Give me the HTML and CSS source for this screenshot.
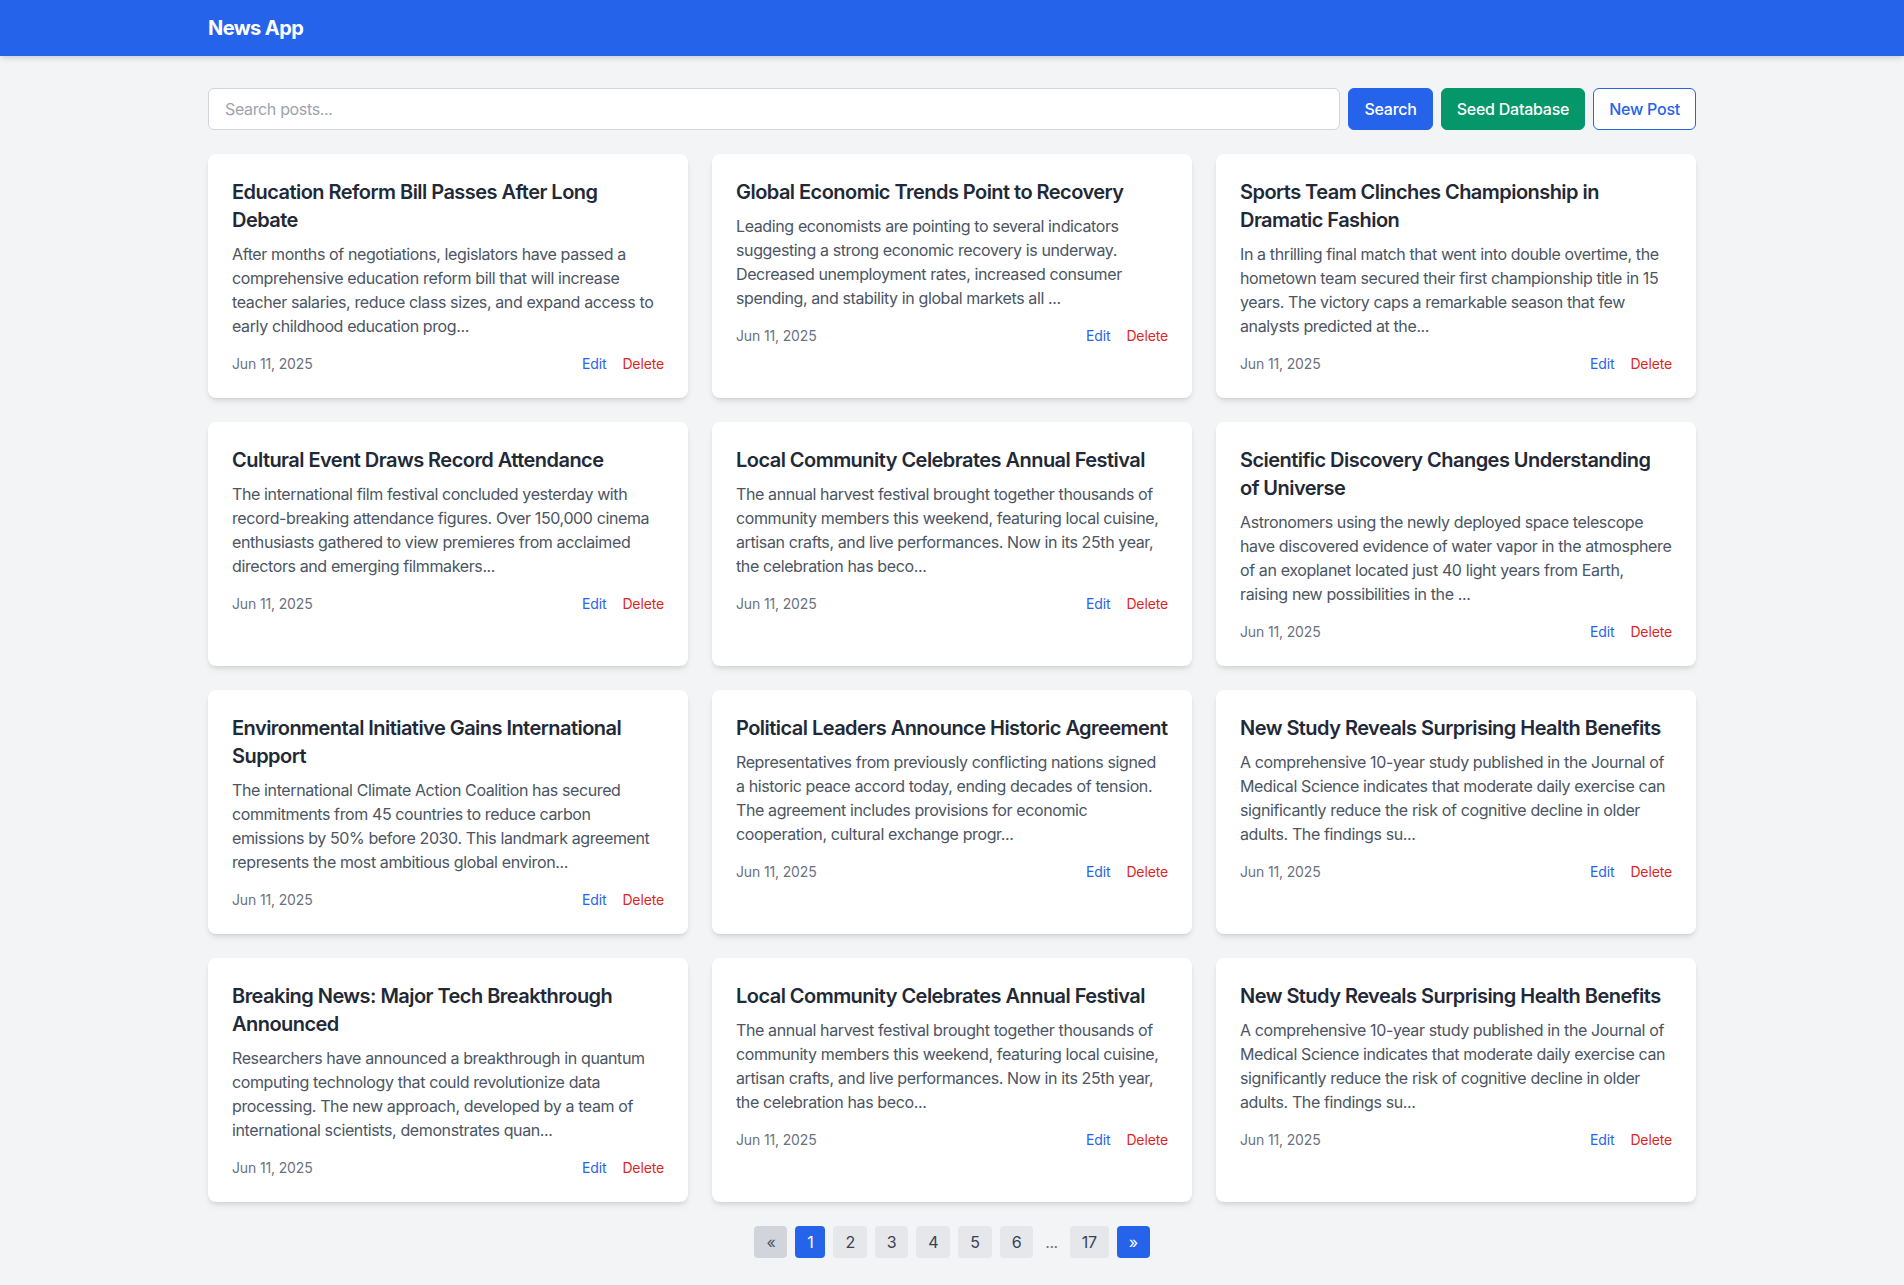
FILE: index.html
```html
<!DOCTYPE html>
<html lang="en">
<head>
<meta charset="utf-8">
<title>News App</title>
<link rel="stylesheet" href="styles.css">
</head>
<body>
<header class="topbar">
  <div class="container">
    <h1 class="brand">News App</h1>
  </div>
</header>
<main class="container main">
  <div class="toolbar">
    <input class="search-input" type="text" placeholder="Search posts...">
    <button class="btn btn-blue">Search</button>
    <button class="btn btn-green">Seed Database</button>
    <button class="btn btn-outline">New Post</button>
  </div>

  <div class="grid">
    <article class="card">
      <h2 class="card-title">Education Reform Bill Passes After Long Debate</h2>
      <p class="card-text">After months of negotiations, legislators have passed a comprehensive education reform bill that will increase teacher salaries, reduce class sizes, and expand access to early childhood education prog...</p>
      <div class="card-footer"><span class="date">Jun 11, 2025</span><div class="actions"><a class="edit">Edit</a><a class="delete">Delete</a></div></div>
    </article>
    <article class="card">
      <h2 class="card-title">Global Economic Trends Point to Recovery</h2>
      <p class="card-text">Leading economists are pointing to several indicators suggesting a strong economic recovery is underway. Decreased unemployment rates, increased consumer spending, and stability in global markets all ...</p>
      <div class="card-footer"><span class="date">Jun 11, 2025</span><div class="actions"><a class="edit">Edit</a><a class="delete">Delete</a></div></div>
    </article>
    <article class="card">
      <h2 class="card-title">Sports Team Clinches Championship in Dramatic Fashion</h2>
      <p class="card-text">In a thrilling final match that went into double overtime, the hometown team secured their first championship title in 15 years. The victory caps a remarkable season that few analysts predicted at the...</p>
      <div class="card-footer"><span class="date">Jun 11, 2025</span><div class="actions"><a class="edit">Edit</a><a class="delete">Delete</a></div></div>
    </article>

    <article class="card">
      <h2 class="card-title">Cultural Event Draws Record Attendance</h2>
      <p class="card-text">The international film festival concluded yesterday with record-breaking attendance figures. Over 150,000 cinema enthusiasts gathered to view premieres from acclaimed directors and emerging filmmakers...</p>
      <div class="card-footer"><span class="date">Jun 11, 2025</span><div class="actions"><a class="edit">Edit</a><a class="delete">Delete</a></div></div>
    </article>
    <article class="card">
      <h2 class="card-title">Local Community Celebrates Annual Festival</h2>
      <p class="card-text">The annual harvest festival brought together thousands of community members this weekend, featuring local cuisine, artisan crafts, and live performances. Now in its 25th year, the celebration has beco...</p>
      <div class="card-footer"><span class="date">Jun 11, 2025</span><div class="actions"><a class="edit">Edit</a><a class="delete">Delete</a></div></div>
    </article>
    <article class="card">
      <h2 class="card-title">Scientific Discovery Changes Understanding of Universe</h2>
      <p class="card-text">Astronomers using the newly deployed space telescope have discovered evidence of water vapor in the atmosphere of an exoplanet located just 40 light years from Earth, raising new possibilities in the ...</p>
      <div class="card-footer"><span class="date">Jun 11, 2025</span><div class="actions"><a class="edit">Edit</a><a class="delete">Delete</a></div></div>
    </article>

    <article class="card">
      <h2 class="card-title">Environmental Initiative Gains International Support</h2>
      <p class="card-text">The international Climate Action Coalition has secured commitments from 45 countries to reduce carbon emissions by 50% before 2030. This landmark agreement represents the most ambitious global environ...</p>
      <div class="card-footer"><span class="date">Jun 11, 2025</span><div class="actions"><a class="edit">Edit</a><a class="delete">Delete</a></div></div>
    </article>
    <article class="card">
      <h2 class="card-title">Political Leaders Announce Historic Agreement</h2>
      <p class="card-text">Representatives from previously conflicting nations signed a historic peace accord today, ending decades of tension. The agreement includes provisions for economic cooperation, cultural exchange progr...</p>
      <div class="card-footer"><span class="date">Jun 11, 2025</span><div class="actions"><a class="edit">Edit</a><a class="delete">Delete</a></div></div>
    </article>
    <article class="card">
      <h2 class="card-title">New Study Reveals Surprising Health Benefits</h2>
      <p class="card-text">A comprehensive 10-year study published in the Journal of Medical Science indicates that moderate daily exercise can significantly reduce the risk of cognitive decline in older adults. The findings su...</p>
      <div class="card-footer"><span class="date">Jun 11, 2025</span><div class="actions"><a class="edit">Edit</a><a class="delete">Delete</a></div></div>
    </article>

    <article class="card">
      <h2 class="card-title">Breaking News: Major Tech Breakthrough Announced</h2>
      <p class="card-text">Researchers have announced a breakthrough in quantum computing technology that could revolutionize data processing. The new approach, developed by a team of international scientists, demonstrates quan...</p>
      <div class="card-footer"><span class="date">Jun 11, 2025</span><div class="actions"><a class="edit">Edit</a><a class="delete">Delete</a></div></div>
    </article>
    <article class="card">
      <h2 class="card-title">Local Community Celebrates Annual Festival</h2>
      <p class="card-text">The annual harvest festival brought together thousands of community members this weekend, featuring local cuisine, artisan crafts, and live performances. Now in its 25th year, the celebration has beco...</p>
      <div class="card-footer"><span class="date">Jun 11, 2025</span><div class="actions"><a class="edit">Edit</a><a class="delete">Delete</a></div></div>
    </article>
    <article class="card">
      <h2 class="card-title">New Study Reveals Surprising Health Benefits</h2>
      <p class="card-text">A comprehensive 10-year study published in the Journal of Medical Science indicates that moderate daily exercise can significantly reduce the risk of cognitive decline in older adults. The findings su...</p>
      <div class="card-footer"><span class="date">Jun 11, 2025</span><div class="actions"><a class="edit">Edit</a><a class="delete">Delete</a></div></div>
    </article>
  </div>

  <nav class="pagination">
    <span class="page page-disabled">&laquo;</span>
    <span class="page page-active">1</span>
    <span class="page">2</span>
    <span class="page">3</span>
    <span class="page">4</span>
    <span class="page">5</span>
    <span class="page">6</span>
    <span class="ellipsis">...</span>
    <span class="page">17</span>
    <span class="page page-active">&raquo;</span>
  </nav>
</main>
</body>
</html>
```

FILE: styles.css
```css
* { box-sizing: border-box; }

html, body {
  margin: 0;
  padding: 0;
}

body {
  background: #f3f4f6;
  font-family: Inter, "Noto Sans", "Liberation Sans", sans-serif;
  color: #1f2937;
  font-size: 16px;
  line-height: 24px;
  letter-spacing: -0.024em;
}

.container {
  max-width: 1536px;
  margin: 0 auto;
  padding-left: 24px;
  padding-right: 24px;
}

.topbar {
  background: #2563eb;
  box-shadow: 0 4px 6px -1px rgba(0,0,0,0.1), 0 2px 4px -2px rgba(0,0,0,0.1);
}

.topbar .container {
  padding-top: 16px;
  padding-bottom: 16px;
}

.brand {
  margin: 0;
  color: #ffffff;
  font-size: 20px;
  line-height: 24px;
  font-weight: 700;
  letter-spacing: -0.03em;
}

.main {
  padding-top: 32px;
  padding-bottom: 24px;
}

.toolbar {
  display: flex;
  gap: 8px;
  margin-bottom: 24px;
}

.search-input {
  flex: 1;
  font-family: inherit;
  font-size: 16px;
  line-height: 24px;
  letter-spacing: -0.022em;
  padding: 8px 16px;
  border: 1px solid #d1d5db;
  border-radius: 6px;
  background: #fff;
  color: #1f2937;
  outline: none;
}

.search-input::placeholder {
  color: #9ca3af;
}

.btn {
  font-family: inherit;
  font-size: 16px;
  line-height: 24px;
  letter-spacing: -0.015em;
  font-weight: 500;
  padding: 8px 15px;
  border-radius: 6px;
  border: 1px solid transparent;
  cursor: pointer;
}

.btn-blue {
  background: #2563eb;
  border-color: #2563eb;
  color: #fff;
}

.btn-green {
  background: #059669;
  border-color: #059669;
  color: #fff;
}

.btn-outline {
  background: #fff;
  border-color: #2563eb;
  color: #2563eb;
}

.grid {
  display: grid;
  grid-template-columns: repeat(3, 1fr);
  gap: 24px;
}

.card {
  background: #fff;
  border-radius: 8px;
  padding: 24px;
  box-shadow: 0 4px 6px -1px rgba(0,0,0,0.1), 0 2px 4px -2px rgba(0,0,0,0.1);
}

.card-title {
  margin: 0 0 8px 0;
  font-size: 20px;
  line-height: 28px;
  font-weight: 600;
  color: #1f2937;
  letter-spacing: -0.027em;
}

.card-text {
  margin: 0;
  color: #4b5563;
  font-size: 16px;
  line-height: 24px;
}

.card-footer {
  margin-top: 16px;
  display: flex;
  justify-content: space-between;
  align-items: center;
  font-size: 14px;
  line-height: 20px;
  letter-spacing: -0.01em;
}

.date {
  color: #6b7280;
}

.actions {
  display: flex;
  gap: 16px;
}

.edit {
  color: #2563eb;
  cursor: pointer;
}

.delete {
  color: #dc2626;
  cursor: pointer;
}

.pagination {
  margin-top: 24px;
  display: flex;
  justify-content: center;
  align-items: center;
  gap: 8px;
}

.page {
  display: inline-block;
  padding: 4px 12px;
  border-radius: 4px;
  background: #e5e7eb;
  color: #374151;
  font-size: 16px;
  line-height: 24px;
}

.page-active {
  background: #2563eb;
  color: #fff;
}

.page-disabled {
  background: #d1d5db;
  color: #4b5563;
}

.ellipsis {
  padding: 4px 4px;
  color: #6b7280;
}
```
